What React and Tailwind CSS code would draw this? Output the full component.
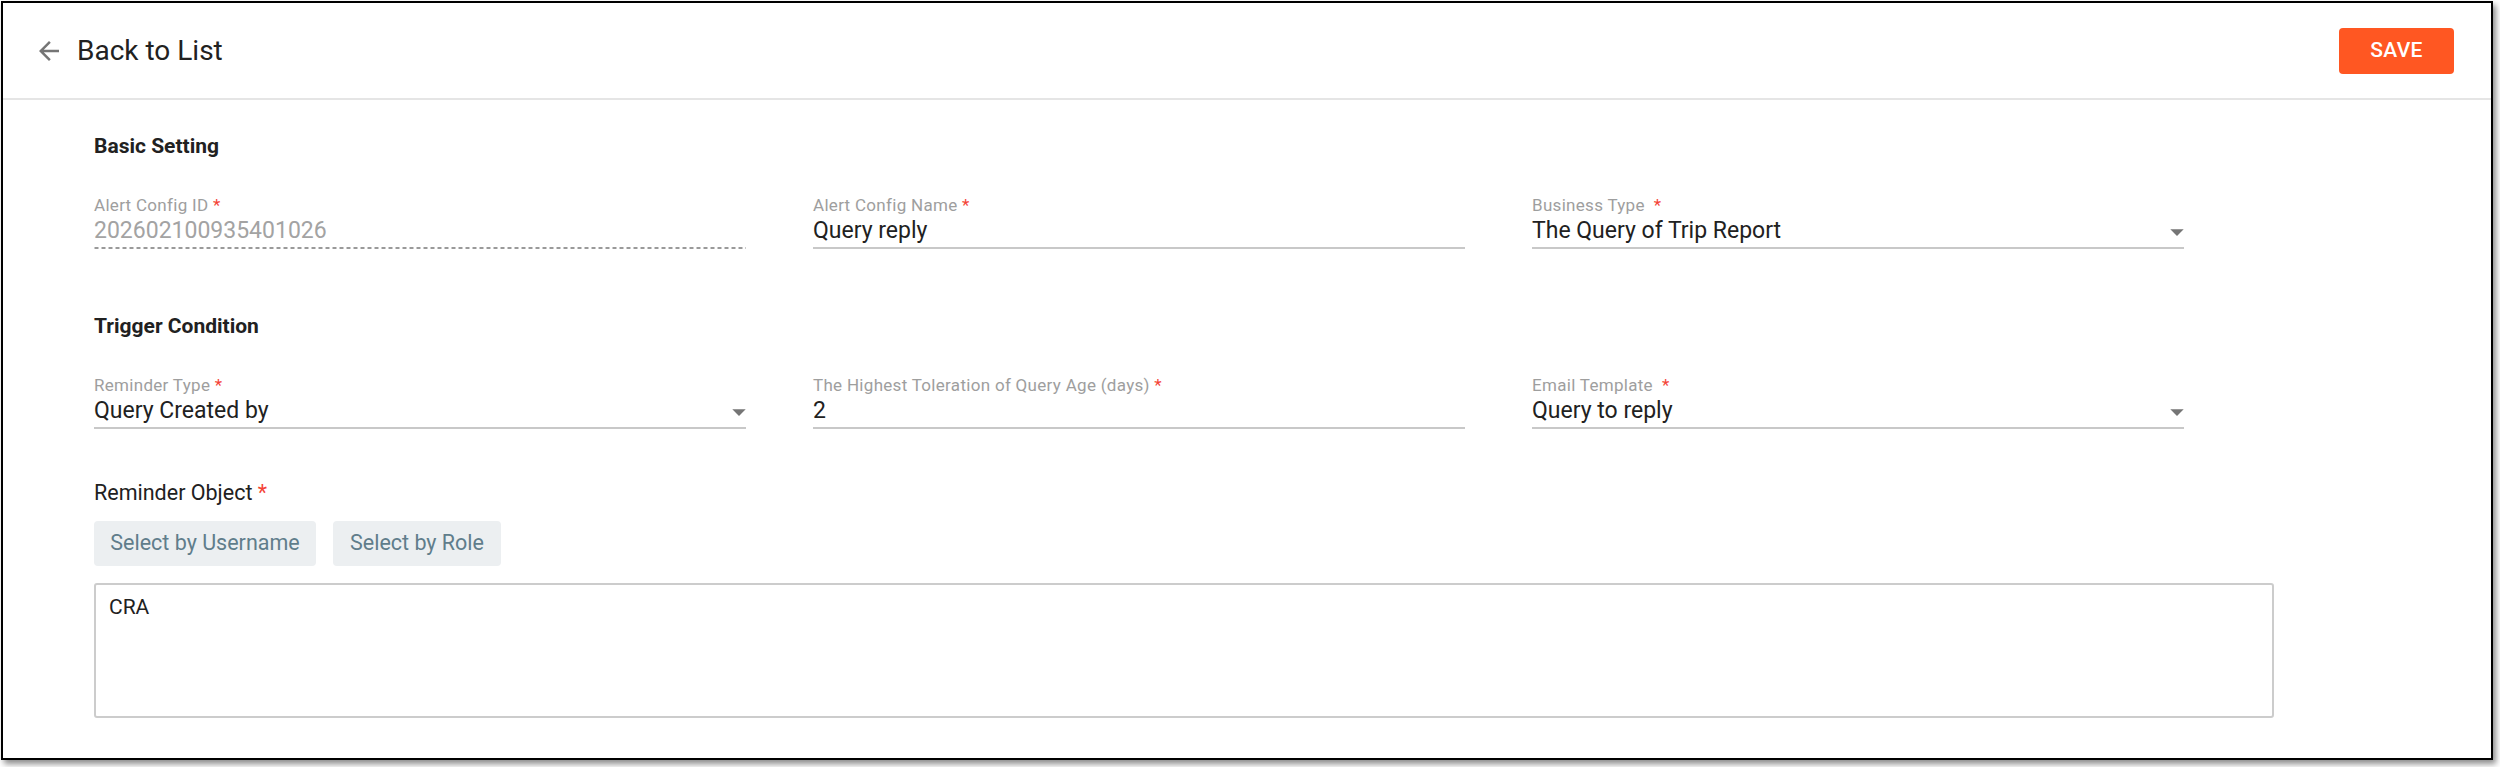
import React from "react";

const font = { fontFamily: "Roboto, 'Liberation Sans', sans-serif" };

// MUI style arrow icons
const ArrowBack = () => (
  <svg width="30" height="30" viewBox="0 0 24 24" className="fill-[#757575]">
    <path d="M20 11H7.83l5.59-5.59L12 4l-8 8 8 8 1.41-1.41L7.83 13H20v-2z" />
  </svg>
);

const DropArrow = () => (
  <svg width="32" height="32" viewBox="0 0 24 24" className="absolute right-[-9px] top-[-1px] fill-[#757575]">
    <path d="M7 10l5 5 5-5z" />
  </svg>
);

const Field = ({ label, value, select, disabled, wide }) => (
  <div className="flex flex-col">
    <div className="text-[17px] leading-[20px] text-[#9e9e9e] whitespace-pre tracking-[0.3px]">
      {label}
      {wide ? "  " : " "}
      <span className="text-[#f44336]">*</span>
    </div>
    {disabled ? (
      <div className="relative mt-[2px] pb-[4px] bg-[linear-gradient(to_right,#9a9a9a_60%,transparent_60%)] bg-[length:7px_2px] bg-repeat-x bg-bottom">
        <div className="text-[23px] leading-[28px] text-[#a3a3a3]">{value}</div>
      </div>
    ) : (
      <div className="relative mt-[2px] pb-[2px] border-b-2 border-[#c8c8c8]">
        <div className="text-[23px] leading-[28px] text-[#212121]">{value}</div>
        {select && <DropArrow />}
      </div>
    )}
  </div>
);

const SectionTitle = ({ children }) => (
  <h3 className="text-[21px] leading-[24px] font-bold text-[#212121]">{children}</h3>
);

const App = () => {
  return (
    <div className="w-[2500px] h-[767px] bg-white overflow-hidden" style={font}>
      <div className="ml-[1px] mt-[1px] w-[2492px] h-[759px] border-2 border-black bg-white shadow-[3px_4px_6px_rgba(0,0,0,0.45)]">
        {/* header */}
        <div className="h-[97px] flex items-center justify-between pl-[31px] pr-[37px] border-b-2 border-[#e5e5e5]">
          <div className="flex items-center gap-[13px]">
            <ArrowBack />
            <span className="text-[28px] leading-[32px] text-[#212121]">Back to List</span>
          </div>
          <button className="w-[115px] h-[46px] rounded-[4px] bg-[#ff5722] text-white text-[21px] font-medium tracking-[0.3px]">
            SAVE
          </button>
        </div>

        {/* form */}
        <div className="pl-[91px] pt-[34px]">
          <SectionTitle>Basic Setting</SectionTitle>
          <div className="mt-[37px] grid grid-cols-[652px_652px_652px] gap-x-[67px]">
            <Field label="Alert Config ID" value="202602100935401026" disabled />
            <Field label="Alert Config Name" value="Query reply" />
            <Field label="Business Type" value="The Query of Trip Report" select wide />
          </div>

          <div className="mt-[65px]">
            <SectionTitle>Trigger Condition</SectionTitle>
          </div>
          <div className="mt-[37px] grid grid-cols-[652px_652px_652px] gap-x-[67px]">
            <Field label="Reminder Type" value="Query Created by" select />
            <Field label="The Highest Toleration of Query Age (days)" value="2" />
            <Field label="Email Template" value="Query to reply" select wide />
          </div>

          <div className="mt-[52px] text-[21.5px] leading-[24px] text-[#212121]">
            Reminder Object <span className="text-[#f44336]">*</span>
          </div>
          <div className="mt-[16px] flex gap-[17px]">
            <button className="w-[222px] h-[45px] rounded-[4px] bg-[#eceff1] text-[#607d8b] text-[21.5px]">
              Select by Username
            </button>
            <button className="w-[168px] h-[45px] rounded-[4px] bg-[#eceff1] text-[#607d8b] text-[21.5px]">
              Select by Role
            </button>
          </div>
          <div className="mt-[17px] w-[2180px] h-[135px] border-2 border-[#cccccc] rounded-[3px] pl-[13px] pt-[10px]">
            <span className="text-[21px] leading-[25px] text-[#212121]">CRA</span>
          </div>
        </div>
      </div>
    </div>
  );
};

export default App;
